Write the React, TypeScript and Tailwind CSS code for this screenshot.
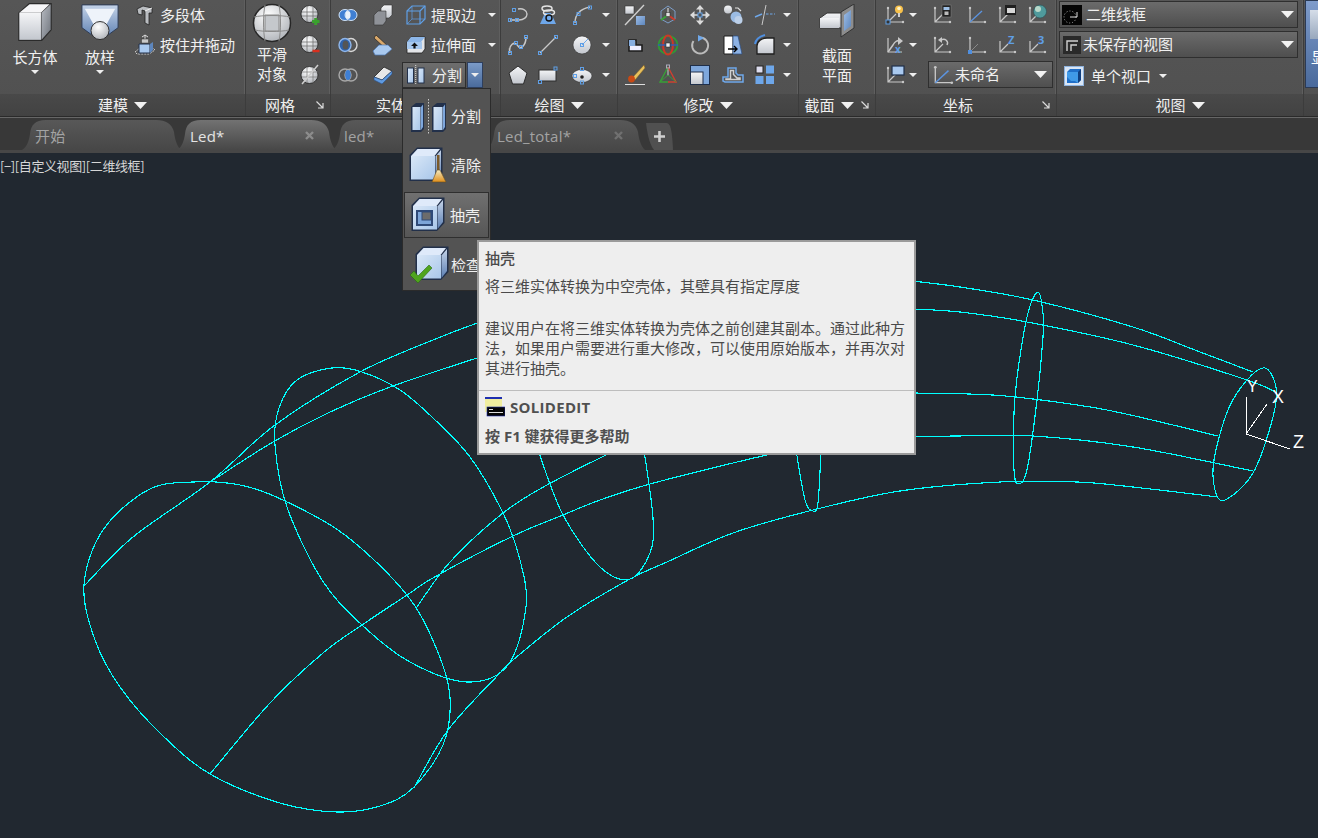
import React from "react";

type P = [number, number];
const smooth = (pts: P[], closed = false) => {
  const n = pts.length;
  const at = (i: number): P => (closed ? pts[(i + n) % n] : pts[Math.max(0, Math.min(n - 1, i))]);
  let d = `M${pts[0][0]} ${pts[0][1]}`;
  const end = closed ? n : n - 1;
  for (let i = 0; i < end; i++) {
    const [p0, p1, p2, p3] = [at(i - 1), at(i), at(i + 1), at(i + 2)];
    d += `C${p1[0] + (p2[0] - p0[0]) / 6} ${p1[1] + (p2[1] - p0[1]) / 6} ${p2[0] - (p3[0] - p1[0]) / 6} ${p2[1] - (p3[1] - p1[1]) / 6} ${p2[0]} ${p2[1]}`;
  }
  return d + (closed ? "Z" : "");
};

const curves: { p: P[]; c?: boolean }[] = [
  { c: true, p: [[84, 585], [103, 530], [148, 490], [193, 482], [240, 485], [283, 500], [345, 535], [407, 595], [437, 650], [450, 697], [443, 745], [413, 788], [380, 806], [337, 812], [280, 803], [210, 774], [160, 733], [120, 687], [95, 640]] },
  { c: true, p: [[332, 368], [297, 380], [279, 408], [275, 445], [287, 507], [322, 580], [362, 625], [410, 662], [467, 682], [508, 665], [526, 607], [520, 560], [503, 513], [470, 457], [433, 418], [400, 390], [362, 372]] },
  { p: [[538, 450], [563, 515], [600, 567], [630, 579], [650, 553], [653, 518], [644, 450]] },
  { p: [[796, 450], [805, 500], [813, 511], [818, 503], [821, 450]] },
  { c: true, p: [[1038, 292], [1043, 313], [1043, 337], [1037, 400], [1027, 470], [1018, 484], [1014, 470], [1014, 413], [1018, 370], [1028, 313]] },
  { c: true, p: [[1265, 368], [1276, 387], [1273, 417], [1253, 473], [1225, 500], [1215, 490], [1214, 460], [1228, 410], [1247, 380]] },
  { p: [[85, 585], [133, 537], [210, 482], [275, 425], [360, 372], [433, 340], [480, 322]] },
  { p: [[912, 281], [960, 287], [1033, 300], [1133, 327], [1200, 352], [1253, 372]] },
  { p: [[210, 482], [273, 442], [330, 412], [390, 387], [480, 357]] },
  { p: [[912, 309], [960, 312], [1027, 322], [1133, 345], [1247, 380], [1277, 393]] },
  { p: [[210, 774], [270, 703], [323, 653], [362, 625], [407, 595], [438, 575], [513, 536], [563, 515], [600, 500], [650, 484], [733, 463], [780, 452]] },
  { p: [[912, 393], [969, 394], [1016, 397], [1107, 410], [1218, 436]] },
  { p: [[414, 788], [448, 730], [500, 673], [513, 660], [567, 617], [630, 579], [667, 562], [733, 533], [813, 510], [900, 491], [1000, 482], [1077, 482], [1133, 487], [1218, 497]] },
  { p: [[417, 607], [450, 562], [503, 513], [547, 485], [612, 452]] },
  { p: [[912, 437], [957, 436], [1033, 436], [1133, 447], [1253, 471]] },
];

const Defs = () => (
  <svg width="0" height="0" className="absolute">
    <defs>
      <linearGradient id="gw" x1="0" y1="0" x2="0" y2="1"><stop offset="0" stopColor="#f4f5f7" /><stop offset="1" stopColor="#c3c7ce" /></linearGradient>
      <linearGradient id="gs" x1="0" y1="0" x2="1" y2="1"><stop offset="0" stopColor="#b9bdc4" /><stop offset="1" stopColor="#6f747c" /></linearGradient>
      <linearGradient id="gb" x1="0" y1="0" x2="1" y2="1"><stop offset="0" stopColor="#d9e7f7" /><stop offset="1" stopColor="#a9c7ea" /></linearGradient>
      <linearGradient id="gn" x1="0" y1="0" x2="1" y2="1"><stop offset="0" stopColor="#9dbde6" /><stop offset="1" stopColor="#5d86bd" /></linearGradient>
      <linearGradient id="gv" x1="0" y1="0" x2="0" y2="1"><stop offset="0" stopColor="#c4d3e8" /><stop offset="1" stopColor="#5c7fb2" /></linearGradient>
      <radialGradient id="gq" cx="0.4" cy="0.3" r="0.8"><stop offset="0" stopColor="#ffffff" /><stop offset="1" stopColor="#a9adb3" /></radialGradient>
      <linearGradient id="gy" x1="0" y1="0" x2="0" y2="1"><stop offset="0" stopColor="#f2e9c0" /><stop offset="1" stopColor="#e08f1c" /></linearGradient>
      <linearGradient id="tabA" x1="0" y1="0" x2="0" y2="1"><stop offset="0" stopColor="#727272" /><stop offset="1" stopColor="#474747" /></linearGradient>
      <linearGradient id="tabI" x1="0" y1="0" x2="0" y2="1"><stop offset="0" stopColor="#585858" /><stop offset="1" stopColor="#474747" /></linearGradient>
    </defs>
  </svg>
);

const BL = "#6fa8ea";
const GR = "#c8c8c8";
const Grip = ({ x, y }: { x: number; y: number }) => <rect x={x - 1.5} y={y - 1.5} width="3" height="3" fill="none" stroke="#5f9fe6" strokeWidth="1" />;
const Ucs = () => (
  <g fill={GR}>
    <path d="M3 3V17H18M3 17L11 9" fill="none" stroke={GR} strokeWidth="1.2" />
    <circle cx="3" cy="3" r="1.2" /><circle cx="18" cy="17" r="1.2" />
  </g>
);

const meshLines = "M2 7H18M2 11H18M7 1V17M13 1V17";

const icons: Record<string, React.ReactNode> = {
  union: <><ellipse cx="7" cy="10" rx="6" ry="5.5" fill="#3f7fd3" stroke="#cfe2f7" /><ellipse cx="13" cy="10" rx="6" ry="5.5" fill="#3f7fd3" stroke="#cfe2f7" /><ellipse cx="10" cy="10" rx="2.6" ry="4" fill="#e8f1fb" /></>,
  subtract: <><ellipse cx="13" cy="10" rx="6" ry="6.5" fill="none" stroke="#d7d7d7" strokeWidth="1.4" /><ellipse cx="7" cy="10" rx="6" ry="6.5" fill="#2f62ab" stroke="#8fb6ea" strokeWidth="1.4" /><ellipse cx="7.5" cy="10" rx="3" ry="4.5" fill="#555" /></>,
  intersect: <><ellipse cx="7" cy="10" rx="6" ry="6" fill="none" stroke="#a9a9a9" strokeWidth="1.4" /><ellipse cx="13" cy="10" rx="6" ry="6" fill="none" stroke="#a9a9a9" strokeWidth="1.4" /><ellipse cx="10" cy="10" rx="2.8" ry="5" fill="#3f7fd3" /></>,
  boxes: <><path d="M8 3L11 0H19V10L16 13H8Z" fill="url(#gw)" stroke="#333" strokeWidth=".6" /><path d="M1 10L5 6H13V16L10 20H1Z" fill="#8f9298" stroke="#333" strokeWidth=".6" /></>,
  knife: <><path d="M3 0L17 13L14 15L1 3Z" fill="#d9a86a" stroke="#222" strokeWidth=".7" /><path d="M0 16L6 10H15L19 14L12 20H2Z" fill="#a9c9ef" stroke="#4d79b5" strokeWidth=".7" /></>,
  imprint: <><path d="M1 12L11 2L19 6L9 15Z" fill="#e8e8e8" stroke="#222" strokeWidth=".8" /><path d="M1 12L9 15L19 6V9L9 19L1 15Z" fill="#5f9ae0" stroke="#2b4f85" strokeWidth=".6" /></>,
  wire: <g fill="none" stroke="#5f9fe6" strokeWidth="1.2"><path d="M1 6L6 1H19V14L14 19H1Z" /><path d="M1 6H14V19M14 6L19 1" /><path d="M6 1V14H19M6 14L1 19" strokeWidth=".7" /></g>,
  extrude: <><path d="M1 7L5 2H19V14L16 18H1Z" fill="#e3e5e8" stroke="#222" strokeWidth=".8" /><path d="M1 7H15L19 2H5Z" fill="#8cb6e8" /><rect x="1" y="7" width="15" height="7" fill="#a7c8ee" /><path d="M8.5 7.5L12 11H9.6V13.5H7.4V11H5Z" fill="#111" /></>,
  split: <><rect x="1.5" y="3" width="6" height="15" fill="url(#gb)" stroke="#22304a" /><rect x="12" y="3" width="6" height="15" fill="url(#gb)" stroke="#22304a" /><path d="M9.7 0V20" stroke="#ddd" strokeDasharray="1 1" /></>,
  pline: <g fill="none"><path d="M2 15H11C16 15 19 12 19 9C19 5.5 15 3 10 4" stroke={GR} strokeWidth="1.4" /><Grip x={2} y={15} /><Grip x={9} y={15} /><Grip x={6} y={5} /></g>,
  helix: <><path d="M2 19L7 8H13L18 19Z" fill="#6ea7ea" /><g fill="none" stroke="#e4e4e4" strokeWidth="1.5"><ellipse cx="9" cy="3.5" rx="5" ry="2.5" /><ellipse cx="11" cy="7.5" rx="5.5" ry="2.5" /></g><ellipse cx="11" cy="13" rx="3" ry="3" fill="none" stroke="#111" strokeWidth="1.4" /></>,
  arc: <g fill="none"><path d="M3 18C3 10 8 4 18 2" stroke={GR} strokeWidth="1.3" /><Grip x={3} y={18} /><Grip x={6.5} y={9} /><Grip x={18} y={2.5} /></g>,
  spline: <g fill="none"><path d="M2 18C0 10 7 5 10 11C12 15 18 11 18 2" stroke={GR} strokeWidth="1.6" /><Grip x={2} y={18} /><Grip x={8} y={8} /><Grip x={13} y={12} /><Grip x={18} y={2} /></g>,
  line: <g fill="none"><path d="M2 18L18 2" stroke={GR} strokeWidth="1.3" /><Grip x={2} y={18} /><Grip x={18} y={2} /></g>,
  circle: <><circle cx="10" cy="10" r="9" fill="url(#gw)" stroke="#333" strokeWidth=".6" /><path d="M10 10L16 4" stroke={BL} /><Grip x={10} y={10} /></>,
  penta: <path d="M10 1L19 8L15.5 19H4.5L1 8Z" fill="url(#gw)" stroke="#2c2c2c" strokeWidth="1" />,
  rect: <g><rect x="1" y="5" width="17" height="11" fill="url(#gw)" stroke="#2c2c2c" /><g fill="none"><Grip x={17.5} y={3.5} /><Grip x={2} y={17} /></g></g>,
  ellipse: <><ellipse cx="10" cy="11" rx="10" ry="6.5" fill="url(#gw)" stroke="#333" strokeWidth=".6" /><circle cx="10" cy="12" r="1.8" fill="#222" /><g fill="none"><Grip x={10} y={4} /><Grip x={3} y={11} /><Grip x={10} y={17.5} /></g></>,
  mirror: <><rect x="0" y="1" width="9" height="8" fill="url(#gw)" stroke="#333" strokeWidth=".6" /><rect x="11" y="11" width="9" height="9" fill="url(#gn)" /><path d="M0 20L19 0" stroke="#cfcfcf" strokeWidth="1.4" /></>,
  move3d: <><path d="M10 1L17 6L17 14L10 18L3 14L3 6Z" fill="none" stroke="#7c9ec9" /><path d="M10 10V3" stroke="#b8b8b8" strokeWidth="1.6" /><path d="M10 10L3 15" stroke="#38a638" strokeWidth="1.8" /><path d="M10 10L17 15" stroke="#d13a2a" strokeWidth="1.8" /><rect x="8" y="7.5" width="4" height="4" fill="#e3e3e3" stroke="#222" strokeWidth=".5" /></>,
  move: <g fill="#dcdcdc"><path d="M10 0L14 4.5H6ZM10 20L6 15.5H14ZM0 10L4.5 6V14ZM20 10L15.5 14V6Z" /><path d="M10 4V16M4 10H16" stroke="#dcdcdc" strokeWidth="1.4" /><rect x="8" y="8" width="4" height="4" fill="#555" stroke="#5f9fe6" /></g>,
  copy: <><circle cx="5" cy="4.5" r="4" fill="url(#gw)" /><circle cx="13" cy="12" r="5.5" fill="#9bbce4" /><circle cx="15.5" cy="15" r="4" fill="#bcd0e9" /><path d="M12 3H15L18 6" fill="none" stroke="#ddd" strokeWidth="1.2" /></>,
  breakl: <g fill="none"><path d="M0 12L7 9" stroke={BL} strokeWidth="1.4" /><path d="M11 0L7 20" stroke={GR} strokeWidth="1" /><path d="M11 9H20" stroke={BL} strokeDasharray="2.5 1.5" strokeWidth="1.2" /></g>,
  small: <><path d="M4 5H11V10H17V16H4Z" fill="#eef" stroke="#1d1d1d" strokeWidth="1.6" /><rect x="4" y="5" width="6" height="6" fill="#87aee0" /></>,
  rot3d: <><ellipse cx="10" cy="10" rx="9.5" ry="9" fill="none" stroke="#2e9c36" strokeWidth="1.8" /><ellipse cx="10" cy="10" rx="5" ry="9.5" fill="none" stroke="#cf3626" strokeWidth="1.9" /><path d="M0 10H20" stroke="#2f5fba" strokeWidth="1.4" /><rect x="8" y="8" width="4" height="4" fill="#f0f0f0" stroke="#222" strokeWidth=".5" /></>,
  rot: <><path d="M10 2.5A8 8 0 1 1 3.5 6" fill="none" stroke="#bcbcbc" strokeWidth="1.9" /><path d="M8 0L14 3L8 6.5Z" fill="#6fa8ea" /></>,
  trim: <><path d="M1 1H10V19H1Z" fill="#fff" stroke="#1c1c1c" /><path d="M10 1H15L19 19H10Z" fill="#8db2e4" stroke="#2b4f85" strokeWidth=".7" /><path d="M5 14H14M11 11L14 14L11 17" stroke="#000" strokeWidth="1.4" fill="none" /></>,
  fillet: <><path d="M2 19V11C2 6 7 3 12 3H19V19Z" fill="url(#gw)" stroke="#1f1f1f" strokeWidth="1.3" /><path d="M0 9C1 4 6 1 10 0" fill="none" stroke="#4f8fe0" strokeWidth="2" /></>,
  brush: <><path d="M8 12L19 0L20 3L10 15Z" fill="#e8c05c" stroke="#7c5a20" strokeWidth=".5" /><circle cx="6.5" cy="14" r="3.4" fill="#c94a14" /><path d="M0 19.5H20" stroke="#ddd" /></>,
  align3d: <><path d="M10 2V11" stroke="#aaa" strokeWidth="1.4" /><path d="M10 2L2 17H10" fill="none" stroke="#38a038" strokeWidth="1.4" /><path d="M10 2L18 17H10" fill="none" stroke="#cf4030" strokeWidth="1.4" /><path d="M2 17L10 10L18 17" fill="none" stroke="#38a038" strokeWidth=".9" /><rect x="8.5" y="0" width="3" height="3" fill="none" stroke="#aab" /></>,
  scale: <><rect x="0.5" y="0.5" width="19" height="19" fill="#7ea7dc" stroke="#1f2f4a" /><rect x="0.5" y="7" width="12.5" height="12.5" fill="url(#gw)" stroke="#1f2f4a" /></>,
  offset: <g fill="none"><path d="M0 16V12H5V3H13V8L15 10H20V17H2Z" stroke={BL} strokeWidth="1.5" /><path d="M3 14.5V14H7.5V5.5H10.5V9.5L14 13H17V14.5Z" stroke="#d0d0d0" strokeWidth="1.5" /></g>,
  array: <><rect x="1" y="1" width="7" height="7" fill="#dde" stroke="#222" /><rect x="11" y="0.5" width="8" height="8" fill="#6ea7ea" /><rect x="0.5" y="11" width="8" height="8" fill="#6ea7ea" /><rect x="11" y="11" width="8" height="8" fill="#6ea7ea" /></>,
  ubulb: <><Ucs /><circle cx="14" cy="4.5" r="4" fill="#f8c14a" /><circle cx="14" cy="3.5" r="1.8" fill="#fff4c9" /><path d="M14 8V12" stroke="#ddd" strokeWidth="1.8" /><rect x="1" y="15" width="4" height="4" fill="#333" stroke="#5f9fe6" /></>,
  uphone: <><Ucs /><rect x="10" y="0" width="9" height="12" fill="#222" stroke="#888" strokeWidth=".5" /><rect x="11.5" y="2" width="6" height="3" fill="#9ec0e6" /><rect x="12.5" y="6.5" width="4" height="3.5" fill="#bbb" /></>,
  ublue: <g><path d="M3 3V17H18" fill="none" stroke={GR} strokeWidth="1.2" /><circle cx="3" cy="3" r="1.2" fill={GR} /><circle cx="18" cy="17" r="1.2" fill={GR} /><path d="M3 17L15 6" stroke="#5c94e0" strokeWidth="1.3" /></g>,
  uwin: <><Ucs /><rect x="8" y="0" width="11" height="10" fill="#1f1f1f" /><rect x="10" y="3" width="8" height="5" fill="#d7d7d7" /></>,
  uglobe: <><Ucs /><circle cx="13" cy="6.5" r="6.5" fill="#4f9a9c" stroke="#2a5055" strokeWidth=".6" /><circle cx="11" cy="4" r="3" fill="#b9d8c9" /></>,
  urot: <><path d="M3 3V17H17" fill="none" stroke={GR} strokeWidth="1.2" /><path d="M3 17L8 10C10 6 13 5 15 6" fill="none" stroke={GR} strokeWidth="1.5" /><path d="M13 2L18 6L13 10Z" fill={GR} /><text x="10" y="18" fontSize="10" fontWeight="700" fill="#5f9fe6">x</text></>,
  uundo: <><Ucs /><path d="M9 5C13 3 17 6 15 10" fill="none" stroke={GR} strokeWidth="1.4" /><path d="M6 5L10 2V8Z" fill={GR} /></>,
  uorig: <g><path d="M3 3V17H18" fill="none" stroke={GR} strokeWidth="1.2" /><circle cx="3" cy="3" r="1.2" fill={GR} /><circle cx="18" cy="17" r="1.2" fill={GR} /><path d="M3 17L11 9" stroke="#8a8a8a" /><rect x="1" y="15" width="4" height="4" fill="#4f8fe0" /></g>,
  uz: <g><path d="M3 6V17H18M3 17L11 9" fill="none" stroke={GR} strokeWidth="1.2" /><circle cx="18" cy="17" r="1.2" fill={GR} /><text x="11" y="9" fontSize="11" fontWeight="700" fill="#5f9fe6">Z</text></g>,
  u3: <g><path d="M3 6V17H18M3 17L11 9" fill="none" stroke={GR} strokeWidth="1.2" /><circle cx="18" cy="17" r="1.2" fill={GR} /><text x="11" y="9" fontSize="11" fontWeight="700" fill="#5f9fe6">3</text></g>,
  urect: <><Ucs /><rect x="7" y="1" width="12" height="9" fill="#a9c9ef" stroke="#1f2f4a" strokeWidth="1.2" /></>,
  meshp: <><circle cx="9.5" cy="9" r="8.5" fill="url(#gq)" stroke="#222" strokeWidth=".8" /><path d={meshLines} stroke="#666" strokeWidth=".7" /><path d="M12 16.5H19.5M15.7 13V20" stroke="#3aa12e" strokeWidth="3" /></>,
  meshm: <><circle cx="9.5" cy="9" r="8.5" fill="url(#gq)" stroke="#222" strokeWidth=".8" /><path d={meshLines} stroke="#666" strokeWidth=".7" /><path d="M12.5 16H19.5" stroke="#d8301f" strokeWidth="2.5" /></>,
  mesho: <><circle cx="9.5" cy="10" r="8.5" fill="url(#gq)" stroke="#222" strokeWidth=".8" /><path d="M2 7H18M2 12H18M7 2V18M13 2V18" stroke="#777" strokeWidth=".7" /><path d="M2 19L18 0" stroke="#cfcfcf" strokeWidth="1.5" /></>,
  poly: <><path d="M2 4L8 1L17 3V8L14 8V20L10 18V6L7 5V10L3 9Z" fill="#b9bcc0" stroke="#222" strokeWidth=".8" /><path d="M10 6L17 3" fill="none" stroke="#eee" /></>,
  press: <><path d="M0 17L6 12H17L20 15L14 19H2Z" fill="none" stroke="#ccc" strokeDasharray="2 1" /><path d="M4 9H15V18H4Z" fill="#a9c9ef" stroke="#22304a" /><path d="M15 9L18 7V15L15 18Z" fill="#5d86bd" /><path d="M10 0V6M7 2L10 0L13 2" stroke="#ddd" fill="none" /><rect x="6.5" y="4" width="7" height="4" fill="#c9c9c9" stroke="#333" strokeWidth=".5" /></>,
};

const I = ({ n, s = 20 }: { n: string; s?: number }) => (
  <svg width={s} height={s} viewBox="0 0 20 20" className="block shrink-0 overflow-visible">{icons[n]}</svg>
);

const Tri = ({ big }: { big?: boolean }) =>
  big ? (
    <svg width="13" height="7" viewBox="0 0 13 7" className="block shrink-0"><path d="M0 0H13L6.5 7Z" fill="#f2f2f2" /></svg>
  ) : (
    <svg width="8" height="4" viewBox="0 0 8 4" className="block shrink-0"><path d="M0 0H8L4 4Z" fill="#eeeeee" /></svg>
  );

const Corner = () => (
  <svg width="8" height="8" viewBox="0 0 8 8" className="absolute right-[6px] top-[7px]"><path d="M0.5 0.5L7 7M7 2V7H2" fill="none" stroke="#dcdcdc" strokeWidth="1.2" /></svg>
);

const Col = ({ items, className }: { items: string[]; className: string }) => (
  <div className={`flex flex-col shrink-0 ${className}`}>
    {items.map((n, i) => (
      <div key={i} className="h-[30px] flex items-center justify-center">{n && <I n={n} />}</div>
    ))}
  </div>
);
const Arrows = ({ className }: { className: string }) => (
  <div className={`flex flex-col shrink-0 ${className}`}>
    {[0, 1, 2].map((i) => (
      <div key={i} className="h-[30px] flex items-center justify-center"><Tri /></div>
    ))}
  </div>
);

const Panel = ({ title, arrow, corner, className, children }: { title: string; arrow?: boolean; corner?: boolean; className: string; children: React.ReactNode }) => (
  <div className={`flex flex-col shrink-0 border-r border-r-[#3c3c3c] shadow-[inset_-1px_0_0_#5f5f5f] ${className}`}>
    <div className="h-[94px] flex overflow-hidden">{children}</div>
    <div className={`relative h-[22px] flex items-center justify-center gap-[6px] bg-gradient-to-b from-[#494949] to-[#424242] text-[#efefef] ${corner ? "pr-[16px]" : ""}`}>
      <span className="leading-[22px]">{title}</span>
      {arrow && <Tri big />}
      {corner && <Corner />}
    </div>
  </div>
);

const Big = ({ className, box, label, sub, arrow, children }: { className: string; box: string; label: string; sub?: string; arrow?: boolean; children: React.ReactNode }) => (
  <div className={`flex flex-col items-center shrink-0 ${className}`}>
    <div className={`flex items-center justify-center ${box}`}>{children}</div>
    <div className="leading-[20px] text-[#f0f0f0]">{label}</div>
    {sub && <div className="leading-[20px] text-[#f0f0f0]">{sub}</div>}
    {arrow && <div className="mt-[3px]"><Tri /></div>}
  </div>
);

const Combo = ({ className, children }: { className: string; children: React.ReactNode }) => (
  <div className={`flex items-center border border-[#2f2f2f] bg-gradient-to-b from-[#6b6b6b] to-[#4f4f4f] text-[#f0f0f0] ${className}`}>{children}</div>
);

const Cube = ({ fill, side = "url(#gv)" }: { fill: string; side?: string }) => (
  <>
    <path d="M1.5 9L9 1.5H34.5V27L27 35H1.5Z" fill="#22304a" />
    <path d="M3 10L9.5 3H32L26.5 10Z" fill="#dfeafa" />
    <rect x="3" y="10" width="24" height="23.5" fill={fill} />
    <path d="M27.5 10.5L33 4V26L27.5 33Z" fill={side} />
  </>
);

const Tab = ({ className, label, active, x }: { className: string; label: string; active?: boolean; x?: boolean }) => (
  <div className={`relative h-[30px] shrink-0 flex items-center pt-[1px] ${className}`}>
    <svg className="absolute inset-0 w-full h-full overflow-visible" viewBox="0 0 154 30" preserveAspectRatio="none">
      <path d="M0 30C5 27 7 21 8 14C9 5 13 0 24 0H134C144 0 150 4 152 12C153 20 155 26 159 30Z" fill={active ? "url(#tabA)" : "url(#tabI)"} />
    </svg>
    <span className={`relative leading-[28px] tracking-[0.2px] ${active ? "text-[#e4e4e4]" : "text-[#a3a3a3]"}`}>{label}</span>
    {x && (
      <svg width="9" height="9" viewBox="0 0 9 9" className="absolute right-[17px] top-[11px]"><path d="M1 1L8 8M8 1L1 8" stroke={active ? "#8c8c8c" : "#707070"} strokeWidth="2.4" /></svg>
    )}
  </div>
);

export default function App() {
  return (
    <div className="relative w-[1318px] h-[838px] overflow-hidden flex flex-col bg-[#212830] text-[15px] font-['Open_Sans','Noto_Sans_CJK_SC',sans-serif]">
      <Defs />

      {/* ribbon */}
      <div className="flex h-[116px] bg-gradient-to-b from-[#565656] to-[#505050] shrink-0">
        <Panel title="建模" arrow className="w-[246px]">
          <Big className="w-[70px]" box="h-[47px]" label="长方体" arrow>
            <svg width="36" height="40" viewBox="4 2 33 37" className="block mt-[-4px]">
              <path d="M5 12L15 3H36V28L27 38H5Z" fill="#2b2b2b" />
              <path d="M6 12L15.5 4H34L26 12Z" fill="#f6f6f8" />
              <rect x="6" y="12" width="20" height="25" fill="url(#gw)" />
              <path d="M26.5 12L35 4V27.5L26.5 37Z" fill="url(#gs)" />
            </svg>
          </Big>
          <Big className="w-[60px]" box="h-[47px]" label="放样" arrow>
            <svg width="40" height="38" viewBox="0 0 40 40" className="block mt-[-4px]">
              <path d="M1 2H39V26L24 37H16L1 26Z" fill="url(#gv)" stroke="#2b3a55" />
              <path d="M4 6L14 24H26L36 6Z" fill="#eef3fa" />
              <circle cx="20" cy="29" r="9.5" fill="url(#gq)" stroke="#2b2b2b" />
            </svg>
          </Big>
          <div className="ml-[5px]">
            <div className="h-[30px] flex items-center gap-[5px] text-[#f0f0f0]"><I n="poly" />多段体</div>
            <div className="h-[30px] flex items-center gap-[5px] text-[#f0f0f0]"><I n="press" />按住并拖动</div>
          </div>
        </Panel>

        <Panel title="网格" corner className="w-[85px]">
          <Big className="w-[52px]" box="h-[44px]" label="平滑" sub="对象">
            <svg width="40" height="40" viewBox="0 0 40 40" className="block mt-[2px]">
              <circle cx="20" cy="20" r="18.5" fill="url(#gq)" stroke="#262626" strokeWidth="1.5" />
              <path d="M13 12H27V28H13Z" fill="#c5c8cc" stroke="#8a8a8a" />
              <path d="M2 14C10 12 30 12 38 14M3 27C12 29 28 29 37 27M13 2C11 12 11 28 13 38M27 2C29 12 29 28 27 38" fill="none" stroke="#8a8a8a" />
            </svg>
          </Big>
          <Col className="w-[24px]" items={["meshp", "meshm", "mesho"]} />
        </Panel>

        <Panel title="实体编辑" arrow className="w-[170px]">
          <Col className="w-[34px]" items={["union", "subtract", "intersect"]} />
          <Col className="w-[36px]" items={["boxes", "knife", "imprint"]} />
          <div className="w-[99px] text-[#f0f0f0]">
            <div className="h-[30px] flex items-center pl-[5px]"><I n="wire" /><span className="ml-[5px] w-[50px]">提取边</span><span className="ml-[7px]"><Tri /></span></div>
            <div className="h-[30px] flex items-center pl-[5px]"><I n="extrude" /><span className="ml-[5px] w-[50px]">拉伸面</span><span className="ml-[7px]"><Tri /></span></div>
            <div className="h-[30px] flex items-center pl-[1px]">
              <div className="w-[64px] h-[26px] flex items-center pl-[3px] border border-[#2e2e2e] bg-gradient-to-b from-[#6e6e6e] to-[#5a5a5a]"><I n="split" /><span className="ml-[6px]">分割</span></div>
              <div className="ml-[1px] w-[16px] h-[26px] flex items-center justify-center border border-[#2e3f5e] bg-gradient-to-b from-[#7b9bc8] to-[#4a6b9c]"><Tri /></div>
            </div>
          </div>
        </Panel>

        <Panel title="绘图" arrow className="w-[117px]">
          <Col className="w-[34px]" items={["pline", "spline", "penta"]} />
          <Col className="w-[26px]" items={["helix", "line", "rect"]} />
          <Col className="w-[41px]" items={["arc", "circle", "ellipse"]} />
          <Arrows className="w-[8px]" />
        </Panel>

        <Panel title="修改" arrow className="w-[181px]">
          <Col className="w-[33px]" items={["mirror", "small", "brush"]} />
          <Col className="w-[33px]" items={["move3d", "rot3d", "align3d"]} />
          <Col className="w-[32px]" items={["move", "rot", "scale"]} />
          <Col className="w-[34px]" items={["copy", "trim", "offset"]} />
          <Col className="w-[30px]" items={["breakl", "fillet", "array"]} />
          <Arrows className="ml-[3px] w-[8px]" />
        </Panel>

        <Panel title="截面" arrow corner className="w-[77px]">
          <Big className="w-[76px]" box="h-[45px]" label="截面" sub="平面">
            <svg width="36" height="34" viewBox="0 0 36 34" className="block mt-[-4px]">
              <path d="M1 14L8 9H24V24H1Z" fill="url(#gw)" stroke="#333" />
              <path d="M1 14H20V24H1Z" fill="url(#gw)" />
              <path d="M22 8L35 0V24L22 33Z" fill="#8d8d8d" stroke="#333" />
              <path d="M25 11L32 6V22L25 27Z" fill="url(#gn)" />
            </svg>
          </Big>
        </Panel>

        <Panel title="坐标" corner className="w-[181px]">
          <Col className="ml-[7px] w-[24px]" items={["ubulb", "urot", "urect"]} />
          <Arrows className="ml-[2px] w-[8px]" />
          <div className="ml-[11px] w-[126px]">
            <div className="flex pl-[4px]"><Col className="w-[20px] mr-[10px]" items={["uphone"]} /><Col className="w-[30px]" items={["ublue"]} /><Col className="w-[30px]" items={["uwin"]} /><Col className="w-[30px]" items={["uglobe"]} /></div>
            <div className="flex pl-[4px]"><Col className="w-[20px] mr-[10px]" items={["uundo"]} /><Col className="w-[30px]" items={["uorig"]} /><Col className="w-[30px]" items={["uz"]} /><Col className="w-[30px]" items={["u3"]} /></div>
            <Combo className="mt-[1px] h-[27px] w-[125px] pl-[3px]">
              <I n="ublue" s={22} />
              <span className="ml-[1px]">未命名</span>
              <span className="ml-auto mr-[5px]"><Tri big /></span>
            </Combo>
          </div>
        </Panel>

        <Panel title="视图" arrow className="w-[247px]">
          <div className="ml-[2px] w-[239px] pt-[1px]">
            <Combo className="h-[27px] pl-[2px]">
              <svg width="20" height="20" viewBox="0 0 20 20" className="block shrink-0"><rect width="20" height="20" fill="#050505" /><circle cx="8" cy="12" r="6" fill="none" stroke="#aaa" strokeDasharray="1 2" /><path d="M8 12H15V7" fill="none" stroke="#ddd" /></svg>
              <span className="ml-[4px]">二维线框</span>
              <span className="ml-auto mr-[3px]"><Tri big /></span>
            </Combo>
            <Combo className="mt-[3px] h-[27px] pl-[3px]">
              <svg width="18" height="18" viewBox="0 0 18 18" className="block shrink-0"><rect width="18" height="18" fill="#2a2a2a" /><path d="M4 15V5H15M8 15V9H14" fill="none" stroke="#d0d0d0" strokeWidth="1.4" /></svg>
              <span className="ml-[2px]">未保存的视图</span>
              <span className="ml-auto mr-[3px]"><Tri big /></span>
            </Combo>
            <div className="mt-[3px] h-[30px] flex items-center pl-[5px] text-[#f0f0f0]">
              <svg width="20" height="20" viewBox="0 0 20 20" className="block shrink-0"><rect x=".5" y=".5" width="19" height="19" fill="#d9e6f6" stroke="#8fb3de" /><path d="M3 6L6 3H17V14L14 17H3Z" fill="#1f6fc9" /><path d="M3 6H14V17L11 15H7L3 11Z" fill="#3f9ae8" /><path d="M14 6L17 3V14L14 17Z" fill="#0f3f80" /></svg>
              <span className="ml-[7px]">单个视口</span>
              <span className="ml-[8px]"><Tri /></span>
            </div>
          </div>
        </Panel>

        <div className="flex-1 flex flex-col">
          <div className="h-[94px] pl-[1px]">
            <div className="h-[88px] w-[20px] border border-[#2b3a55] bg-gradient-to-b from-[#7f9ccb] to-[#4a6a9c] overflow-hidden text-white">
              <div className="mt-[9px] ml-[4px] h-[29px] w-[16px] bg-gradient-to-b from-[#d5dde8] to-[#98a8bd]" />
              <div className="mt-[8px] ml-[5px] w-[15px] leading-[20px]">显</div>
            </div>
          </div>
          <div className="h-[22px] bg-gradient-to-b from-[#494949] to-[#424242]" />
        </div>
      </div>

      {/* tab strip */}
      <div className="h-[37px] shrink-0 border-t border-t-[#2a2a2a] shadow-[inset_0_1px_0_#666666] bg-[#383838] flex items-end pl-[22px] border-b-[3px] border-b-[#474747] box-border">
        <Tab className="w-[154px] pl-[13px]" label="开始" />
        <Tab className="w-[154px] pl-[13px] ml-[1px]" label="Led*" active x />
        <Tab className="w-[154px] pl-[12px] ml-[1px]" label="led*" x />
        <Tab className="w-[154px] pl-[11px]" label="Led_total*" x />
        <div className="relative ml-[6px] w-[27px] h-[27px] shrink-0 flex items-center justify-center">
          <svg className="absolute inset-0 w-full h-full" viewBox="0 0 27 26" preserveAspectRatio="none"><path d="M0 0H20C24 0 26 4 27 26H8C3 20 1 8 0 0Z" fill="#505050" /></svg>
          <svg width="11" height="11" viewBox="0 0 11 11" className="relative"><path d="M5.5 0V11M0 5.5H11" stroke="#cfcfcf" strokeWidth="2.6" /></svg>
        </div>
      </div>

      {/* drawing canvas */}
      <div className="relative flex-1">
        <div className="absolute left-0 top-[5px] text-[13px] leading-[16px] tracking-[-0.4px] text-[#d6d6d6] font-['Noto_Sans_CJK_SC',sans-serif]">[−][自定义视图][二维线框]</div>
        <svg width="1318" height="685" viewBox="0 153 1318 685" className="block" shapeRendering="crispEdges">
          {curves.map((c, i) => (
            <path key={i} d={smooth(c.p, c.c)} fill="none" stroke="#00ffff" strokeWidth="1.15" />
          ))}
          <path d="M1246 397V434L1267 404M1246 434L1290 449" fill="none" stroke="#ffffff" strokeWidth="1" />
          <g fill="#ffffff" fontFamily="'Liberation Sans',sans-serif" fontWeight="400" shapeRendering="auto">
            <text x="1293" y="448" fontSize="18">Z</text>
            <text x="1272" y="403" fontSize="18">X</text>
            <text x="1247" y="392" fontSize="16">Y</text>
          </g>
        </svg>
      </div>

      {/* split dropdown */}
      <div className="absolute left-[402px] top-[88px] w-[89px] h-[203px] border border-[#2b2b2b] bg-[#535353] flex flex-col px-[1px] pt-[2px] text-[#f0f0f0]">
        <div className="h-[50px] flex items-center pl-[6px]">
          <svg width="38" height="38" viewBox="0 0 38 38" className="block shrink-0">
            <path d="M1 10L6 6H14V32L11 35H1Z" fill="#22304a" /><rect x="2.5" y="10" width="8" height="23" fill="url(#gb)" /><path d="M11 10L13 7.5V30L11 33Z" fill="#7ea7dc" />
            <path d="M18.5 2V38" stroke="#c9c9c9" strokeDasharray="1.5 1.5" />
            <path d="M22 10L27 6H36V32L33 35H22Z" fill="#22304a" /><rect x="23.5" y="10" width="9" height="23" fill="url(#gb)" /><path d="M33 10L35 7.5V30L33 33Z" fill="#7ea7dc" />
          </svg>
          <span className="ml-[3px]">分割</span>
        </div>
        <div className="h-[50px] flex items-center pl-[4px]">
          <svg width="40" height="40" viewBox="0 0 40 40" className="block shrink-0 overflow-visible">
            <Cube fill="url(#gb)" />
            <path d="M29 9H31.5V24H29Z" fill="#7b5a2a" />
            <path d="M29 24H32L38 36H24Z" fill="url(#gy)" stroke="#6b4f1c" strokeWidth=".6" />
          </svg>
          <span className="ml-[3px]">清除</span>
        </div>
        <div className="h-[47px] mt-[1px] flex items-center pl-[5px] border border-[#2f2f2f] bg-gradient-to-b from-[#707070] to-[#565656]">
          <svg width="38" height="38" viewBox="0 0 38 38" className="block shrink-0">
            <Cube fill="url(#gb)" />
            <rect x="6" y="14" width="17" height="16" fill="#2f4a78" />
            <rect x="8" y="16" width="13" height="12" fill="#7da5d8" />
            <rect x="12" y="16" width="9" height="8" fill="#6c6c6c" stroke="#2f4a78" />
          </svg>
          <span className="ml-[2px]">抽壳</span>
        </div>
        <div className="h-[50px] mt-[2px] flex items-center pl-[4px]">
          <svg width="42" height="40" viewBox="0 0 42 40" className="block shrink-0">
            <g transform="translate(6,0)"><Cube fill="url(#gb)" /></g>
            <path d="M2 30L6 26L10 31L21 20L24 23L10 38Z" fill="#4fa41e" stroke="#2a6a10" strokeWidth=".6" />
          </svg>
          <span className="ml-[1px]">检查</span>
        </div>
      </div>

      {/* tooltip */}
      <div className="absolute left-[477px] top-[240px] w-[439px] h-[215px] border-2 border-[#9a9a9a] bg-[#eeeeee] text-[#4a4a4a] flex flex-col">
        <div className="px-[6px] pt-[6px] h-[148px] shrink-0 leading-[20px]">
          <div className="font-medium h-[20px]">抽壳</div>
          <div className="mt-[8px] h-[20px]">将三维实体转换为中空壳体，其壁具有指定厚度</div>
          <div className="mt-[23px] w-[424px] leading-[19.8px]">建议用户在将三维实体转换为壳体之前创建其副本。通过此种方法，如果用户需要进行重大修改，可以使用原始版本，并再次对其进行抽壳。</div>
        </div>
        <div className="border-t border-t-[#bdbdbd] px-[6px] font-bold text-[#505050]">
          <div className="h-[32px] flex items-center">
            <svg width="20" height="20" viewBox="0 0 20 20" className="block shrink-0">
              <rect x="0" y="0" width="17" height="15" fill="#f0eea0" /><rect x="0" y="0" width="17" height="2" fill="#1f2fb0" /><rect x="2" y="10" width="18" height="9" fill="#050505" stroke="#1f2fb0" strokeWidth=".6" /><path d="M4 12.5H8M4 15.5H18" stroke="#ddd" />
            </svg>
            <span className="ml-[5px] font-['Open_Sans',sans-serif] tracking-[0.3px]">SOLIDEDIT</span>
          </div>
          <div className="mt-[-4px] leading-[34px]">按 F1 键获得更多帮助</div>
        </div>
      </div>
    </div>
  );
}
